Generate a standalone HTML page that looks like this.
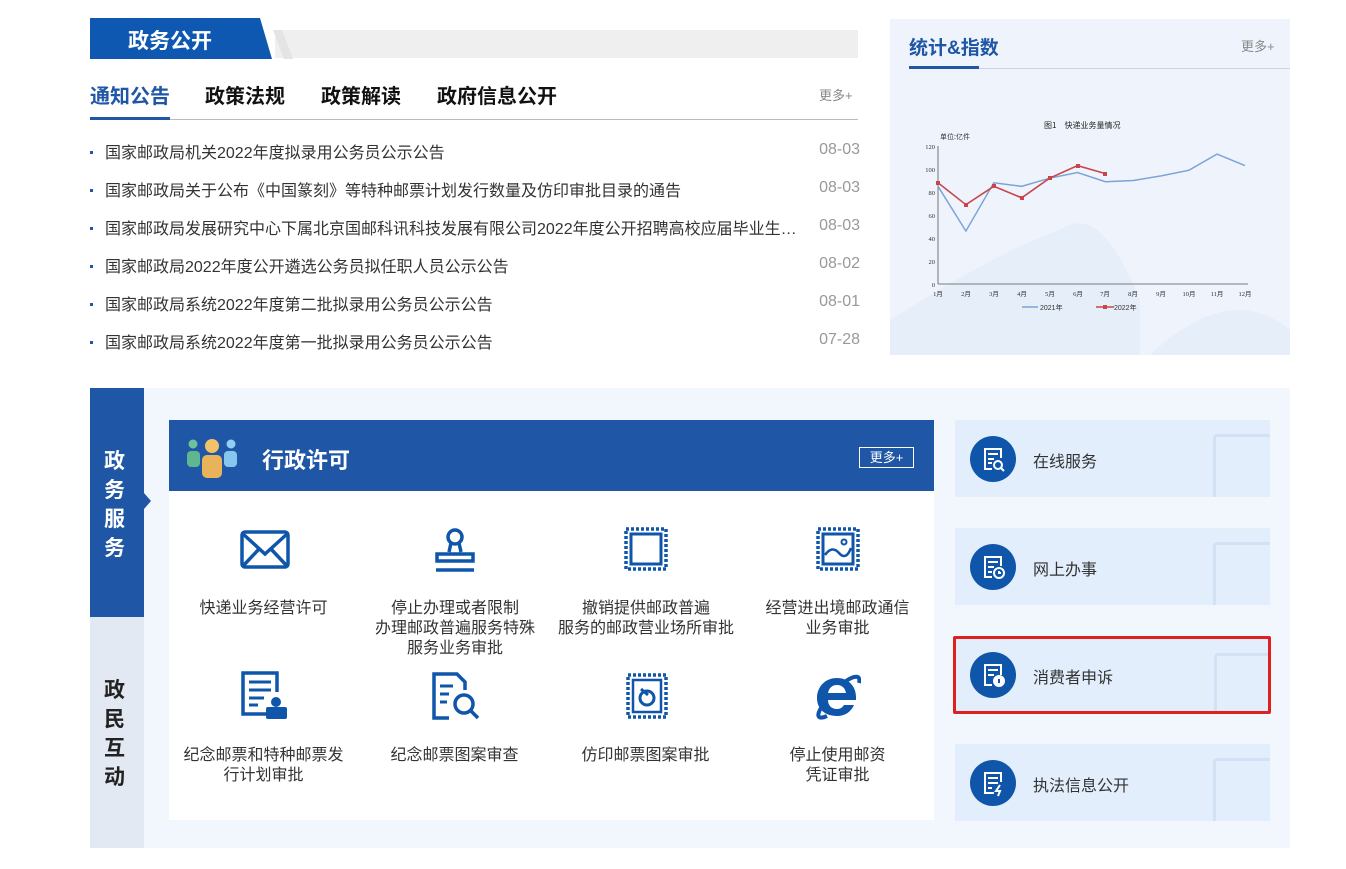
<!DOCTYPE html>
<html><head><meta charset="utf-8"><style>
*{margin:0;padding:0;box-sizing:border-box}
body{width:1346px;height:869px;background:#fff;position:relative;font-family:"Liberation Sans","Noto Sans CJK SC",sans-serif;overflow:hidden}
.a{position:absolute}
.tab{font-size:20px;font-weight:bold;color:#111;top:80px}
.li{left:90px;font-size:16px;color:#333;width:770px;height:22px}
.li:before{content:"";position:absolute;left:0;top:10px;width:3px;height:3px;background:#1f56a5}
.li span{position:absolute;left:15px;top:-2px;max-width:692px;white-space:nowrap;overflow:hidden;text-overflow:ellipsis}
.li b{position:absolute;right:0;top:0;font-weight:normal;color:#999;font-size:16px}
.cell{width:191px;text-align:center;font-size:16px;color:#333;line-height:20px}
.card{left:955px;width:315px;height:77px;background:#e2eefb;overflow:hidden}
.card .c{position:absolute;left:15px;top:16px;width:46px;height:46px;border-radius:50%;background:#0f56ab}
.card .t{position:absolute;left:78px;top:28px;font-size:16px;color:#333}
.card .g{position:absolute;left:258px;top:14px;width:70px;height:80px;border:3px solid #d2e1f3;border-radius:4px}
</style></head><body>
<div class="a" style="left:275px;top:30px;width:583px;height:28px;background:#efefef"></div>
<svg class="a" style="left:90px;top:18px" width="220" height="41"><polygon points="0,0 170,0 182,41 0,41" fill="#0f58b2"/><polygon points="183,12 192,12 203,41 194,41" fill="#e4e4e4"/></svg>
<div class="a" style="left:128px;top:25px;font-size:21px;font-weight:bold;color:#fff">政务公开</div>
<div class="a tab" style="left:90px;color:#1f56a5">通知公告</div>
<div class="a tab" style="left:205px">政策法规</div>
<div class="a tab" style="left:321px">政策解读</div>
<div class="a tab" style="left:437px">政府信息公开</div>
<div class="a" style="left:819px;top:85px;font-size:13px;color:#888">更多+</div>
<div class="a" style="left:90px;top:119px;width:768px;height:1px;background:#bbb"></div>
<div class="a" style="left:90px;top:117px;width:80px;height:3px;background:#1f56a5"></div>
<div class="a li" style="top:141px"><span>国家邮政局机关2022年度拟录用公务员公示公告</span><b>08-03</b></div>
<div class="a li" style="top:179px"><span>国家邮政局关于公布《中国篆刻》等特种邮票计划发行数量及仿印审批目录的通告</span><b>08-03</b></div>
<div class="a li" style="top:217px"><span>国家邮政局发展研究中心下属北京国邮科讯科技发展有限公司2022年度公开招聘高校应届毕业生就业人员</span><b>08-03</b></div>
<div class="a li" style="top:255px"><span>国家邮政局2022年度公开遴选公务员拟任职人员公示公告</span><b>08-02</b></div>
<div class="a li" style="top:293px"><span>国家邮政局系统2022年度第二批拟录用公务员公示公告</span><b>08-01</b></div>
<div class="a li" style="top:331px"><span>国家邮政局系统2022年度第一批拟录用公务员公示公告</span><b>07-28</b></div>

<div class="a" style="left:890px;top:19px;width:400px;height:336px;background:#eff4fc"></div>
<svg class="a" style="left:890px;top:19px" width="400" height="336" viewBox="890 19 400 336" font-family="Liberation Serif,serif">
<path d="M890 320 Q1000 250 1060 230 Q1100 200 1140 300 L1140 355 L890 355Z" fill="#e6eef9"/>
<path d="M1150 355 Q1230 280 1290 330 L1290 355Z" fill="#e6eef9"/>
<text x="1044" y="128" font-size="8" fill="#222" font-family="Noto Sans CJK SC,sans-serif">图1　快递业务量情况</text>
<text x="940" y="139" font-size="7" fill="#333" font-family="Noto Sans CJK SC,sans-serif">单位:亿件</text>
<line x1="938" y1="146" x2="938" y2="284" stroke="#555" stroke-width=".8"/>
<line x1="938" y1="284" x2="1248" y2="284" stroke="#555" stroke-width=".8"/>
<g font-size="6.5" fill="#333" text-anchor="end">
<text x="935" y="149">120</text><text x="935" y="172">100</text><text x="935" y="195">80</text><text x="935" y="218">60</text><text x="935" y="241">40</text><text x="935" y="264">20</text><text x="935" y="287">0</text></g>
<g font-size="6.5" fill="#333" text-anchor="middle">
<text x="938" y="296">1月</text><text x="966" y="296">2月</text><text x="994" y="296">3月</text><text x="1022" y="296">4月</text><text x="1050" y="296">5月</text><text x="1078" y="296">6月</text><text x="1105" y="296">7月</text><text x="1133" y="296">8月</text><text x="1161" y="296">9月</text><text x="1189" y="296">10月</text><text x="1217" y="296">11月</text><text x="1245" y="296">12月</text></g>
<polyline fill="none" stroke="#7ca3d8" stroke-width="1.5" points="938,186.3 965.9,231.1 993.8,182.8 1021.7,186.3 1049.6,178.2 1077.5,172.5 1105.4,181.7 1133.3,180.5 1161.2,175.9 1189.1,170.2 1217,154.1 1244.9,165.6"/>
<polyline fill="none" stroke="#c8464a" stroke-width="1.6" points="938,182.8 965.9,204.7 993.8,186.3 1021.7,197.8 1049.6,178.2 1077.5,165.6 1105.4,173.6"/>
<g fill="#c8464a"><rect x="936" y="181" width="4" height="4"/><rect x="964" y="203" width="4" height="4"/><rect x="992" y="184" width="4" height="4"/><rect x="1020" y="196" width="4" height="4"/><rect x="1048" y="176" width="4" height="4"/><rect x="1076" y="164" width="4" height="4"/><rect x="1103" y="172" width="4" height="4"/></g>
<line x1="1022" y1="307" x2="1038" y2="307" stroke="#7ca3d8" stroke-width="1.5"/><text x="1040" y="310" font-size="7" fill="#333" font-family="Liberation Sans,sans-serif">2021年</text>
<line x1="1096" y1="307" x2="1114" y2="307" stroke="#c8464a" stroke-width="1.5"/><rect x="1103" y="305" width="4" height="4" fill="#c8464a"/><text x="1114" y="310" font-size="7" fill="#333" font-family="Liberation Sans,sans-serif">2022年</text>
</svg>
<div class="a" style="left:909px;top:33px;font-size:19px;font-weight:bold;color:#1f56a5">统计&amp;指数</div>
<div class="a" style="left:1241px;top:36px;font-size:13px;color:#888">更多+</div>
<div class="a" style="left:909px;top:68px;width:381px;height:1px;background:#c6d4e8"></div>
<div class="a" style="left:909px;top:66px;width:70px;height:3px;background:#1f56a5"></div>

<div class="a" style="left:90px;top:388px;width:1200px;height:460px;background:#f2f7fd"></div>
<div class="a" style="left:90px;top:388px;width:54px;height:229px;background:#1f56a5"></div>
<svg class="a" style="left:144px;top:493px" width="8" height="16"><polygon points="0,0 7,8 0,16" fill="#1f56a5"/></svg>
<div class="a" style="left:90px;top:617px;width:54px;height:231px;background:#e3e9f3"></div>
<div class="a" style="left:104px;top:447px;width:26px;font-size:21px;font-weight:bold;color:#fff;line-height:29px">政务服务</div>
<div class="a" style="left:104px;top:676px;width:26px;font-size:21px;font-weight:bold;color:#222;line-height:29px">政民互动</div>

<div class="a" style="left:169px;top:420px;width:765px;height:400px;background:#fff"></div>
<div class="a" style="left:169px;top:420px;width:765px;height:71px;background:#1f56a5"></div>
<svg class="a" style="left:186px;top:437px" width="52" height="42">
<circle cx="7" cy="7" r="4.5" fill="#6cc39a"/><rect x="1" y="14" width="13" height="16" rx="4" fill="#5fb78f"/>
<circle cx="45" cy="7" r="4.5" fill="#8fd0f5"/><rect x="38" y="14" width="13" height="16" rx="4" fill="#86c7ef"/>
<circle cx="26" cy="9" r="7" fill="#f3c16a"/><rect x="16" y="18" width="20" height="23" rx="5" fill="#e9b35a"/></svg>
<div class="a" style="left:262px;top:443px;font-size:22px;font-weight:bold;color:#fff">行政许可</div>
<div class="a" style="left:859px;top:447px;width:55px;height:21px;border:1px solid #fff;color:#fff;font-size:13px;text-align:center;line-height:19px">更多+</div>

<svg class="a" style="left:240px;top:530px" width="50" height="40" fill="none" stroke="#0f56ab" stroke-width="3.5"><rect x="2" y="2" width="46" height="35" rx="3"/><path d="M3 4 L25 24 L47 4 M3 36 L19 19 M47 36 L31 19"/></svg>
<svg class="a" style="left:434px;top:526px" width="44" height="48" fill="none" stroke="#0f56ab" stroke-width="3.5"><circle cx="21" cy="11" r="7"/><path d="M17 17 L15 26 M25 17 L27 26 M3 35 V28 H39 V35 Z" /><path d="M2 44 H40"/></svg>
<svg class="a" style="left:622px;top:525px" width="48" height="48" fill="none" stroke="#0f56ab" stroke-width="3.5"><rect x="4" y="4" width="40" height="40" stroke-dasharray="3 2"/><rect x="9" y="9" width="30" height="30" stroke-width="3"/></svg>
<svg class="a" style="left:814px;top:525px" width="48" height="48" fill="none" stroke="#0f56ab" stroke-width="3.5"><rect x="4" y="4" width="40" height="40" stroke-dasharray="3 2"/><rect x="9" y="9" width="30" height="30" stroke-width="3"/><path d="M11 30 Q18 20 25 28 T37 23" stroke-width="2.5"/><circle cx="30" cy="17" r="2.5" stroke-width="2"/></svg>
<div class="a cell" style="left:168px;top:599px">快递业务经营许可</div>
<div class="a cell" style="left:359px;top:599px;width:192px;left:359px">停止办理或者限制<br>办理邮政普遍服务特殊<br>服务业务审批</div>
<div class="a cell" style="left:545px;top:599px;width:202px">撤销提供邮政普遍<br>服务的邮政营业场所审批</div>
<div class="a cell" style="left:742px;top:599px">经营进出境邮政通信<br>业务审批</div>
<svg class="a" style="left:240px;top:670px" width="48" height="52" fill="none" stroke="#0f56ab" stroke-width="3.5"><path d="M30 44 H3 V3 H37 V22"/><path d="M9 12 H31 M9 20 H31 M9 28 H24 M9 35 H18" stroke-width="3"/><circle cx="36" cy="32" r="5" fill="#0f56ab" stroke="none"/><rect x="26" y="37" width="21" height="12" rx="2" fill="#0f56ab" stroke="none"/></svg>
<svg class="a" style="left:431px;top:672px" width="50" height="50" fill="none" stroke="#0f56ab" stroke-width="3.5"><path d="M18 46 H3 V2 H26 L34 10 V18"/><path d="M9 14 H22 M9 22 H18 M9 30 H16" stroke-width="3"/><circle cx="33" cy="32" r="9"/><path d="M40 39 L47 46"/></svg>
<svg class="a" style="left:624px;top:671px" width="46" height="50" fill="none" stroke="#0f56ab" stroke-width="3.5"><rect x="4" y="4" width="38" height="42" stroke-dasharray="3 2"/><rect x="9" y="9" width="28" height="32" stroke-width="2.5"/><circle cx="23" cy="27" r="7" stroke-width="3"/><path d="M17 18 L24 24" stroke-width="3"/></svg>
<svg class="a" style="left:813px;top:672px" width="48" height="48"><path d="M24 6 C12 6 4 15 4 26 C4 37 12 44 24 44 C32 44 38 40 41 33 H31 C29 36 27 37 24 37 C18 37 15 33 15 28 H43 C43 27 43 26 43 25 C43 14 35 6 24 6 Z M15 21 C16 16 19 13 24 13 C29 13 32 16 33 21 Z" fill="#0f56ab"/><path d="M33 9 C42 3 48 3 46 11" fill="none" stroke="#0f56ab" stroke-width="4"/><path d="M8 36 C3 44 5 48 14 44" fill="none" stroke="#0f56ab" stroke-width="4"/></svg>
<div class="a cell" style="left:168px;top:746px">纪念邮票和特种邮票发<br>行计划审批</div>
<div class="a cell" style="left:359px;top:746px">纪念邮票图案审查</div>
<div class="a cell" style="left:550px;top:746px">仿印邮票图案审批</div>
<div class="a cell" style="left:742px;top:746px">停止使用邮资<br>凭证审批</div>

<div class="a card" style="top:420px"><div class="g"></div><div class="c"><svg width="46" height="46" fill="none" stroke="#fff" stroke-width="2"><path d="M22 33 H15 V13 H31 V22 M18 18 H28 M18 23 H24 M18 27 H22"/><circle cx="28" cy="29" r="4"/><path d="M31 32 L34 35"/></svg></div><div class="t">在线服务</div></div>
<div class="a card" style="top:528px"><div class="g"></div><div class="c"><svg width="46" height="46" fill="none" stroke="#fff" stroke-width="2"><path d="M22 33 H15 V13 H31 V22 M18 18 H28 M18 23 H24 M18 28 H22"/><circle cx="29" cy="29" r="5"/><path d="M29 27 V29 H31"/></svg></div><div class="t">网上办事</div></div>
<div class="a" style="left:953px;top:636px;width:318px;height:78px;border:3px solid #e0201e;border-radius:2px"></div>
<div class="a card" style="top:639px;height:72px;left:956px;width:312px"><div class="g"></div><div class="c" style="left:14px;top:13px"><svg width="46" height="46" fill="none" stroke="#fff" stroke-width="2"><path d="M22 33 H15 V13 H31 V23 M18 18 H28 M18 23 H24"/><circle cx="29" cy="29" r="5" fill="#fff"/><path d="M29 27 V31" stroke="#0f56ab"/></svg></div><div class="t" style="left:77px;top:25px">消费者申诉</div></div>
<div class="a card" style="top:744px"><div class="g"></div><div class="c"><svg width="46" height="46" fill="none" stroke="#fff" stroke-width="2"><path d="M24 33 H15 V13 H31 V22 M18 18 H28 M18 23 H28 M18 28 H22"/><path d="M30 25 L26 31 H30 L28 36" /></svg></div><div class="t">执法信息公开</div></div>
</body></html>
